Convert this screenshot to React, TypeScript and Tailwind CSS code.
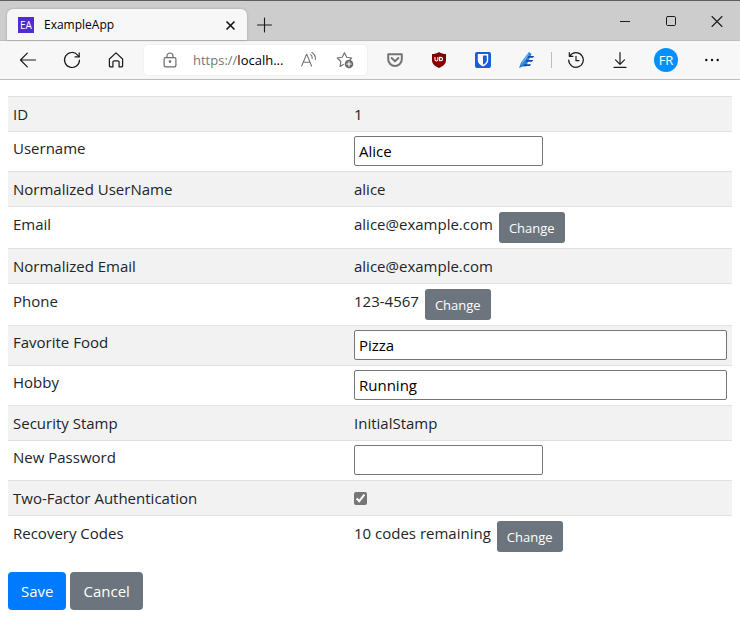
import { useId, useState } from "react";
import type { ReactNode } from "react";

type IconButtonProps = { label: string; className?: string; children: ReactNode };

function IconButton({ label, className = "w-11 h-8", children }: IconButtonProps) {
  return (
    <button
      type="button"
      aria-label={label}
      className={`flex shrink-0 items-center justify-center ${className}`}
    >
      {children}
    </button>
  );
}

type IconProps = { children: ReactNode; color?: string; width?: number };

/* 16x16 outline icon */
function Icon({ children, color = "#1b1b1b", width = 1.2 }: IconProps) {
  return (
    <svg
      viewBox="0 0 16 16"
      className="size-4 overflow-visible"
      fill="none"
      stroke={color}
      strokeWidth={width}
      strokeLinecap="round"
      strokeLinejoin="round"
      aria-hidden="true"
    >
      {children}
    </svg>
  );
}

function TabStrip() {
  return (
    <div className="flex h-10 items-stretch border-t border-[#5f5d60] bg-[#cdcdcd] pl-[7px]">
      <div className="mt-2 flex w-60 items-center rounded-t-md bg-[#f7f7f7] pl-[11px] pr-2 shadow-[0_0_3px_rgba(0,0,0,0.2)]">
        <span className="flex size-4 items-center justify-center bg-[#512bd4] text-[10px] leading-4 text-white">
          EA
        </span>
        <span className="ml-2.5 flex-1 text-[12px] leading-4 text-black">ExampleApp</span>
        <IconButton label="Close tab" className="size-4">
          <svg viewBox="0 0 16 16" className="size-4" stroke="#111" strokeWidth="1.6" aria-hidden="true">
            <path d="M3.500 4.500 11.500 12.500M11.500 4.500 3.500 12.500" />
          </svg>
        </IconButton>
      </div>
      <IconButton label="New tab" className="mt-2 w-[34px]">
        <Icon width={1.1}>
          <path d="M8.500 1v14M1.500 8h14" />
        </Icon>
      </IconButton>
      <div className="ml-auto flex">
        <IconButton label="Minimize" className="w-[46px]">
          <Icon width={1}>
            <path d="M3 8.5h10" strokeLinecap="butt" />
          </Icon>
        </IconButton>
        <IconButton label="Maximize" className="w-[46px]">
          <Icon width={1}>
            <rect x="3.5" y="3.5" width="9" height="9" rx="1.2" />
          </Icon>
        </IconButton>
        <IconButton label="Close window" className="w-[46px]">
          <Icon width={1.1}>
            <path d="M3 3.5l10 10M13 3.5l-10 10" />
          </Icon>
        </IconButton>
      </div>
    </div>
  );
}

function AddressBar() {
  const [address, setAddress] = useState("localh...");
  return (
    <div className="ml-1.5 flex h-[30px] min-w-0 flex-1 items-center rounded bg-white pl-2 pr-1 shadow-[0_0_2px_rgba(0,0,0,0.08)]">
      <IconButton label="Site information" className="h-8 w-9">
        <Icon color="#6b6b6b">
          <rect x="2.1" y="5.6" width="11.8" height="9.3" rx="1.4" />
          <path d="M5 5.5V4a3 3 0 0 1 6 0v1.5" />
          <circle cx="8" cy="9.6" r="0.7" fill="#6b6b6b" />
        </Icon>
      </IconButton>
      <label className="ml-[5px] flex min-w-0 flex-1 items-center text-[13px] leading-5">
        <span className="text-[#767676]">https://</span>
        <input
          aria-label="Address"
          className="w-full min-w-0 flex-1 bg-transparent text-black outline-none"
          value={address}
          onChange={(e) => setAddress(e.target.value)}
        />
      </label>
      <IconButton label="Read aloud" className="h-8 w-9">
        <Icon color="#737373" width={1.1}>
          <path d="M.7 14 5.5 2.4h.3L10.600 14M2.300 10.200h6.700" />
          <path d="M9.700 2.600c1.200 1 1.700 2.400 1.500 4M10.800.5c2.700 1.500 3.900 4 3.600 7" />
        </Icon>
      </IconButton>
      <IconButton label="Add to favorites" className="h-8 w-9">
        <Icon color="#6b6b6b" width={1.100}>
          <path d="M6.300 12.600 3 14.500l.9-5L.3 6l4.900-.7L7.500.8l2.200 4.500 5 .7-1.600 1.500" />
          <circle cx="12" cy="12" r="4.300" fill="#6b6b6b" stroke="none" />
          <path d="M12 9.800v4.400M9.800 12h4.400" stroke="#fff" />
        </Icon>
      </IconButton>
    </div>
  );
}

function Toolbar() {
  return (
    <div className="flex h-10 items-center border-y border-[#bdbdbd] bg-[#f7f7f7] pl-1.5 pr-2">
      <IconButton label="Back">
        <Icon>
          <path d="M15.500 8H.5M7.300 1.200.5 8l6.800 6.800" />
        </Icon>
      </IconButton>
      <IconButton label="Refresh">
        <Icon>
          <path d="M15.500 8A7.500 7.500 0 1 1 13.700 3.100L15 4.600" />
          <path d="M15.200.8v4.100h-4.100" />
        </Icon>
      </IconButton>
      <IconButton label="Home">
        <Icon>
          <path d="M1.400 7 8 .9 14.600 7v6.900a1 1 0 0 1-1 1h-2.500V10.200a1.400 1.400 0 0 0-1.400-1.400H6.300a1.400 1.400 0 0 0-1.400 1.400v4.700H2.400a1 1 0 0 1-1-1Z" />
        </Icon>
      </IconButton>
      <AddressBar />
      <div className="ml-1.5 flex items-center">
        <IconButton label="Pocket">
          <svg viewBox="0 0 16 16" className="size-4" fill="none" stroke="#747474" strokeWidth="2" aria-hidden="true">
            <path d="M1.200 2.200h13.600v5A6.800 6.800 0 0 1 1.200 7.200Z" strokeLinejoin="round" />
            <path d="M4.600 6 8 9.200 11.400 6" strokeLinecap="round" strokeLinejoin="round" />
          </svg>
        </IconButton>
        <IconButton label="uBlock Origin">
          <svg viewBox="0 0 16 16" className="size-4" aria-hidden="true">
            <path d="M8 0C5.800 1.400 3.500 2 1 2v6c0 4 2.800 6.300 7 8 4.200-1.700 7-4 7-8V2c-2.500 0-4.800-.6-7-2Z" fill="#800000" />
            <path d="M4 5v2.500a1.400 1.400 0 0 0 2.900 0V5M8.600 5.400v3.400h1.200a1.700 1.700 0 0 0 0-3.400Z" fill="none" stroke="#fff" strokeWidth="1.100" />
          </svg>
        </IconButton>
        <IconButton label="Bitwarden">
          <svg viewBox="0 0 16 16" className="size-4" aria-hidden="true">
            <rect width="16" height="16" rx="2" fill="#175ddc" />
            <path d="M2.800 2h10.400v6.200c0 2.700-2 4.600-5.200 6.200-3.200-1.600-5.200-3.500-5.200-6.200Z" fill="#fff" />
            <path d="M8 3.500h3.800v4.700c0 1.800-1.300 3.200-3.800 4.500Z" fill="#175ddc" />
          </svg>
        </IconButton>
        <IconButton label="Extension">
          <svg viewBox="0 0 16 16" className="size-4" aria-hidden="true">
            <path d="M10 0 2 10.500 0 16l4-1.500h3L12.500 2Z" fill="#2f7fd8" />
            <path d="M9.500 1 3 10l-1.200 3.500L9.600 4Z" fill="#5ab4f4" />
            <path d="M9 4h6.200L14 5.800H8.200ZM7.500 8h6.800L13 9.800H6.700ZM5.500 12.200H12L11 14H4.600Z" fill="#1747a6" />
          </svg>
        </IconButton>
        <span className="ml-0.5 h-4 w-px bg-[#bdbdbd]" />
        <IconButton label="History" className="h-8 w-12">
          <Icon>
            <path d="M2 3.800A7.300 7.300 0 1 1 .7 8" />
            <path d="M1.300.6v3.700H5M8 4.300v4.400h3" />
          </Icon>
        </IconButton>
        <IconButton label="Downloads" className="h-8 w-10">
          <Icon>
            <path d="M8 .5V12M3.500 7.800 8 12.300l4.500-4.500" />
            <path d="M2 15.300h12" />
          </Icon>
        </IconButton>
        <IconButton label="Profile" className="h-8 w-[52px]">
          <span className="flex size-6 items-center justify-center rounded-full bg-[#0091ff] text-[13px] leading-6 text-white">
            FR
          </span>
        </IconButton>
        <IconButton label="Settings and more" className="h-8 w-10">
          <svg viewBox="0 0 16 16" className="size-4" fill="#111" aria-hidden="true">
            <circle cx="2.300" cy="8" r="1.200" />
            <circle cx="8" cy="8" r="1.200" />
            <circle cx="13.700" cy="8" r="1.200" />
          </svg>
        </IconButton>
      </div>
    </div>
  );
}

type Field = {
  label: string;
  kind: "text" | "change" | "input" | "wide" | "password" | "check";
  value: string;
};

const fields: Field[] = [
  { label: "ID", kind: "text", value: "1" },
  { label: "Username", kind: "input", value: "Alice" },
  { label: "Normalized UserName", kind: "text", value: "alice" },
  { label: "Email", kind: "change", value: "alice@example.com" },
  { label: "Normalized Email", kind: "text", value: "alice@example.com" },
  { label: "Phone", kind: "change", value: "123-4567" },
  { label: "Favorite Food", kind: "wide", value: "Pizza" },
  { label: "Hobby", kind: "wide", value: "Running" },
  { label: "Security Stamp", kind: "text", value: "InitialStamp" },
  { label: "New Password", kind: "password", value: "" },
  { label: "Two-Factor Authentication", kind: "check", value: "" },
  { label: "Recovery Codes", kind: "change", value: "10 codes remaining" },
];

function FieldRow({ label, kind, value }: Field) {
  const id = useId();
  const isBox = kind === "input" || kind === "wide" || kind === "password";
  const pad = isBox ? "px-[5px] pt-1 pb-[5px]" : "p-[5px]";
  return (
    <tr className="border-t border-[#dee2e6] align-top odd:bg-[#f2f2f2]">
      <th scope="row" className={`w-[47.1%] text-left font-normal ${pad}`}>
        {isBox || kind === "check" ? <label htmlFor={id}>{label}</label> : label}
      </th>
      <td className={pad}>
        {kind === "text" && value}
        {kind === "change" && (
          <div className="flex items-start gap-1.5">
            <span>{value}</span>
            <button
              type="button"
              aria-label={`Change ${label}`}
              className="h-[31px] rounded-[3px] bg-[#6c757d] px-2.5 text-[13px] leading-5 text-white"
            >
              Change
            </button>
          </div>
        )}
        {isBox && (
          <input
            id={id}
            type={kind === "password" ? "password" : "text"}
            defaultValue={value}
            className={`block h-[30px] rounded-[2px] border border-[#767676] bg-white px-1 text-black ${
              kind === "wide" ? "w-full" : "w-[189px]"
            }`}
          />
        )}
        {kind === "check" && (
          <div className="flex h-6 items-center">
            <input id={id} type="checkbox" defaultChecked className="size-[13px] accent-[#767676]" />
          </div>
        )}
      </td>
    </tr>
  );
}

export default function App() {
  return (
    <div className="min-h-screen bg-white font-['Open_Sans',sans-serif] text-[15px] leading-6 text-[#212529]">
      <header>
        <TabStrip />
        <Toolbar />
      </header>
      <main className="px-2 pt-4">
        <form onSubmit={(e) => e.preventDefault()}>
          <table className="w-full table-fixed border-collapse">
            <tbody>
              {fields.map((field) => (
                <FieldRow key={field.label} {...field} />
              ))}
            </tbody>
          </table>
          <div className="mt-[15px] flex gap-1">
            <button type="submit" className="h-[38px] rounded bg-[#007bff] px-[13px] text-white">
              Save
            </button>
            <button type="button" className="h-[38px] rounded bg-[#6c757d] px-[13px] text-white">
              Cancel
            </button>
          </div>
        </form>
      </main>
    </div>
  );
}
